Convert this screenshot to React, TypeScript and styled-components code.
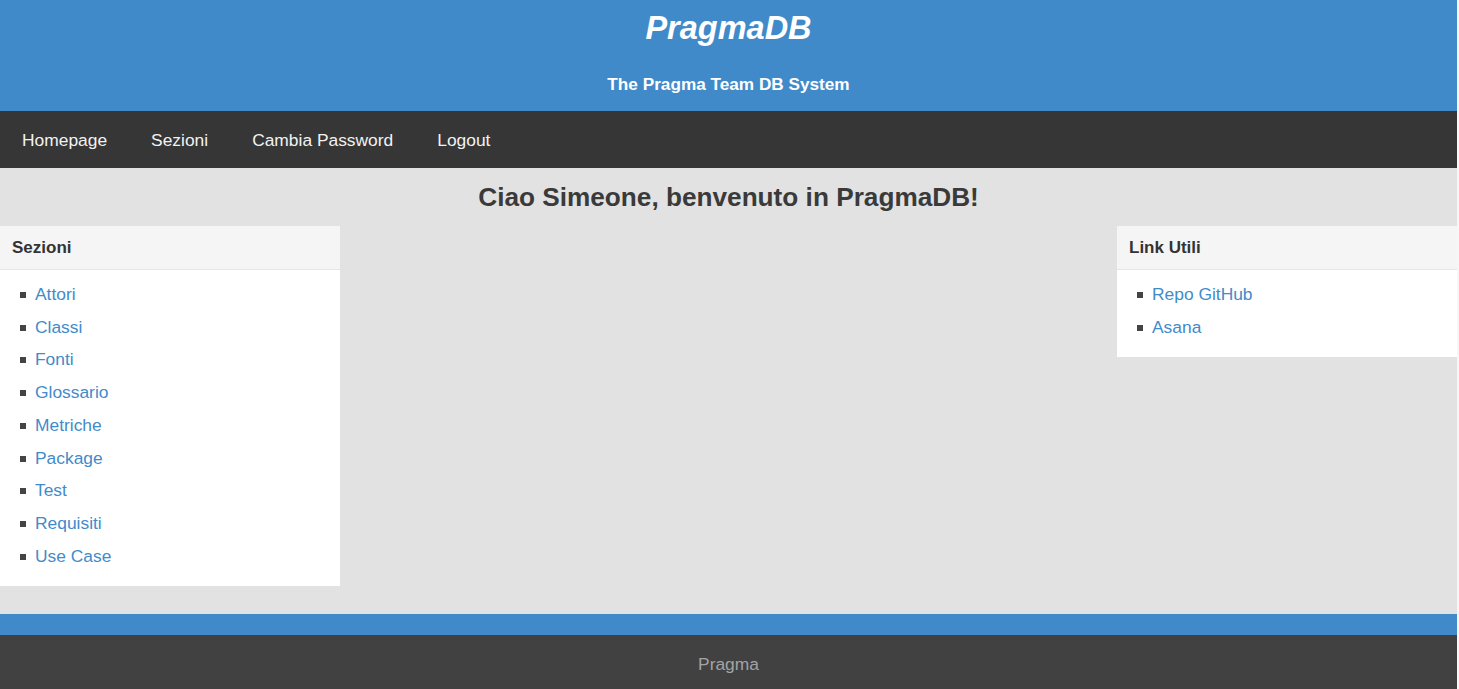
import React from "react";
import styled, { createGlobalStyle } from "styled-components";

const Global = createGlobalStyle`
  html { background: #f7f7f7; }
  body {
    margin: 0;
    font-family: "Liberation Sans", Arial, sans-serif;
    font-size: 17.4px;
    color: #333;
  }
`;

const Page = styled.div`
  margin-right: 2px;
  display: flex;
  flex-direction: column;
  min-height: 689px;
`;

const Header = styled.header`
  background: #418aca;
  height: 111px;
  display: flex;
  flex-direction: column;
  align-items: center;
  color: #fff;
`;

const Title = styled.h1`
  margin: 9px 0 0;
  font-size: 32.5px;
  font-style: italic;
  font-weight: bold;
  line-height: 38px;
`;

const Subtitle = styled.h2`
  margin: 27px 0 0;
  font-size: 17.2px;
  font-weight: bold;
  line-height: 20px;
`;

const Nav = styled.nav`
  background: #363636;
  height: 57px;
  display: flex;
  align-items: center;
`;

const NavLink = styled.a`
  padding: 2px 22px 0;
  color: #f2f2f2;
  text-decoration: none;
  font-size: 17.4px;
  line-height: 55px;
`;

const Main = styled.main`
  background: #e2e2e2;
  flex: 1;
  padding-bottom: 28px;
`;

const Welcome = styled.h2`
  margin: 0;
  height: 58px;
  line-height: 58px;
  text-align: center;
  font-size: 26.2px;
  font-weight: bold;
  color: #3a3a3a;
`;

const Columns = styled.div`
  display: flex;
  justify-content: space-between;
  align-items: flex-start;
`;

const Panel = styled.section`
  width: 340px;
  background: #fff;
`;

const PanelHeader = styled.div`
  background: #f5f5f5;
  border-bottom: 1px solid #e6e6e6;
  height: 43px;
  line-height: 44px;
  padding: 0 12px;
  font-weight: bold;
  font-size: 17px;
  color: #333;
`;

const List = styled.ul`
  margin: 0;
  padding: 8px 0 13.5px 20px;
  list-style: none;
`;

const Item = styled.li`
  height: 32.75px;
  display: flex;
  align-items: center;
  gap: 9px;
  font-size: 17.4px;
  &::before {
    content: "";
    width: 6px;
    height: 6px;
    margin-top: 1px;
    background: #444;
    flex: none;
  }
`;

const ItemLink = styled.a`
  color: #428bca;
  text-decoration: none;
`;

const Strip = styled.div`
  background: #418aca;
  height: 21px;
`;

const Footer = styled.footer`
  background: #414141;
  height: 54px;
  line-height: 58px;
  text-align: center;
  color: #a3a3a3;
  font-size: 17.4px;
`;

const sections = ["Attori", "Classi", "Fonti", "Glossario", "Metriche", "Package", "Test", "Requisiti", "Use Case"];
const links = ["Repo GitHub", "Asana"];

export default function App() {
  return (
    <>
      <Global />
      <Page>
        <Header>
          <Title>PragmaDB</Title>
          <Subtitle>The Pragma Team DB System</Subtitle>
        </Header>
        <Nav>
          <NavLink href="#">Homepage</NavLink>
          <NavLink href="#">Sezioni</NavLink>
          <NavLink href="#">Cambia Password</NavLink>
          <NavLink href="#">Logout</NavLink>
        </Nav>
        <Main>
          <Welcome>Ciao Simeone, benvenuto in PragmaDB!</Welcome>
          <Columns>
            <Panel>
              <PanelHeader>Sezioni</PanelHeader>
              <List>
                {sections.map((s) => (
                  <Item key={s}>
                    <ItemLink href="#">{s}</ItemLink>
                  </Item>
                ))}
              </List>
            </Panel>
            <Panel>
              <PanelHeader>Link Utili</PanelHeader>
              <List>
                {links.map((s) => (
                  <Item key={s}>
                    <ItemLink href="#">{s}</ItemLink>
                  </Item>
                ))}
              </List>
            </Panel>
          </Columns>
        </Main>
        <Strip />
        <Footer>Pragma</Footer>
      </Page>
    </>
  );
}
